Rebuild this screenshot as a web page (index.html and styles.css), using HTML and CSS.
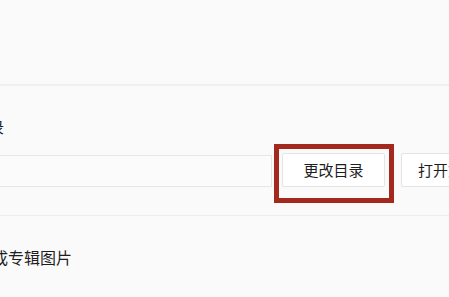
FILE: index.html
```html
<!DOCTYPE html>
<html lang="zh-CN">
<head>
<meta charset="utf-8">
<link rel="stylesheet" href="styles.css">
</head>
<body>
<div class="page">
  <section class="sec sec-top"></section>
  <section class="sec sec-dir">
    <div class="label">下载目录</div>
    <div class="row">
      <div class="path-input"></div>
      <button class="btn btn-change">更改目录</button>
      <button class="btn btn-open">打开文件夹</button>
    </div>
    <div class="highlight"></div>
  </section>
  <section class="sec sec-cover">
    <div class="label-lg">生成专辑图片</div>
  </section>
</div>
</body>
</html>
```
FILE: styles.css
```css
html, body {
  margin: 0;
  padding: 0;
  background: #fafafa;
}
body {
  width: 449px;
  height: 297px;
  overflow: hidden;
  font-family: "Noto Sans CJK SC", "Noto Sans", sans-serif;
  color: #222;
}
.page {
  display: flex;
  flex-direction: column;
}
.sec-top {
  height: 84px;
  border-bottom: 2px solid #f0f0f0;
}
.sec-dir {
  position: relative;
  padding-top: 31px;
  box-sizing: border-box;
  border-bottom: 1px solid #ededed;
  height: 130px;
}
.label {
  font-size: 15px;
  line-height: 20px;
  margin-left: -56px;
  white-space: nowrap;
}
.row {
  display: flex;
  align-items: flex-end;
  margin-top: 16px;
  white-space: nowrap;
}
.path-input {
  width: 272px;
  height: 32px;
  box-sizing: border-box;
  border: 1px solid #e6e6e6;
  border-left: none;
  background: #fbfbfb;
  margin-right: 10px;
  flex: none;
}
.btn {
  flex: none;
  height: 34px;
  box-sizing: border-box;
  border: 1px solid #e4e4e4;
  background: #fff;
  font-family: inherit;
  font-size: 15px;
  color: #1e1e1e;
  border-radius: 2px;
  line-height: 32px;
  padding: 0;
}
.btn-change {
  width: 103px;
  margin-right: 16px;
}
.btn-open {
  padding: 0 16px;
  text-align: left;
}
.highlight {
  position: absolute;
  left: 274px;
  top: 58px;
  width: 120px;
  height: 59px;
  box-sizing: border-box;
  border: 5px solid #a3291f;
}
.sec-cover {
  padding-top: 29px;
}
.label-lg {
  font-size: 16px;
  line-height: 24px;
  margin-left: -24px;
  white-space: nowrap;
  color: #1e1e1e;
}
```
